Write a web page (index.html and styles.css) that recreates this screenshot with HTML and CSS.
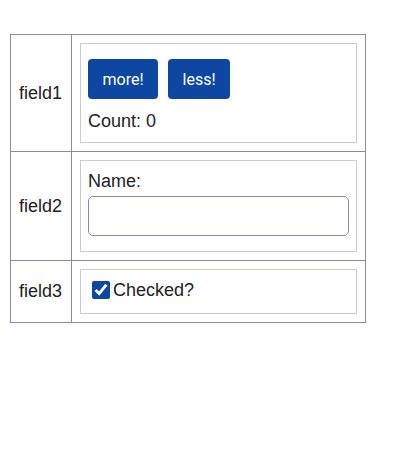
FILE: index.html
```html
<!DOCTYPE html>
<html>
<head>
<meta charset="utf-8">
<link rel="stylesheet" href="styles.css">
</head>
<body>
<table class="form-table">
  <tr>
    <td class="label">field1</td>
    <td class="cell">
      <div class="box">
        <div class="buttons">
          <button class="btn">more!</button>
          <button class="btn">less!</button>
        </div>
        <div class="count">Count: 0</div>
      </div>
    </td>
  </tr>
  <tr>
    <td class="label">field2</td>
    <td class="cell">
      <div class="box">
        <label class="name-label">Name:</label>
        <input class="text-input" type="text">
      </div>
    </td>
  </tr>
  <tr>
    <td class="label">field3</td>
    <td class="cell">
      <div class="box">
        <label class="check-label"><input class="check" type="checkbox" checked>Checked?</label>
      </div>
    </td>
  </tr>
</table>
</body>
</html>
```

FILE: styles.css
```css
html, body {
  margin: 0;
  padding: 0;
  background: #fff;
}
body {
  padding: 34px 0 0 10px;
  font-family: "Liberation Sans", Arial, sans-serif;
  font-size: 18px;
  color: #222;
}
.form-table {
  border-collapse: collapse;
  width: 356px;
}
.form-table td {
  border: 1px solid #8a8aa6;
  padding: 8px;
}
.form-table td.label {
  white-space: nowrap;
  width: 1px;
  padding: 8px 9px 8px 8px;
}
.box {
  border: 1px solid #cccccc;
  padding: 7px;
}
.buttons {
  display: flex;
  gap: 10px;
  margin: 8px 0 8px 0;
}
.btn {
  height: 40px;
  padding: 0 14.5px;
  border: none;
  border-radius: 4px;
  background: #0d47a1;
  color: #fff;
  font-family: Roboto, "Liberation Sans", sans-serif;
  font-size: 16px;
}
.count {
  line-height: 28px;
}
.name-label {
  display: block;
  line-height: 24px;
  margin-top: 1px;
}
.text-input {
  display: block;
  box-sizing: border-box;
  width: 100%;
  height: 40px;
  margin: 3px 0 8px 0;
  border: 1px solid #8a8aa6;
  border-radius: 5px;
  font-size: 18px;
}
.check-label {
  display: flex;
  align-items: center;
  line-height: 24px;
  margin: 1px 0 4px 0;
}
.check {
  width: 18px;
  height: 18px;
  margin: 0 3px 0 4px;
  accent-color: #0d47a1;
}
```
